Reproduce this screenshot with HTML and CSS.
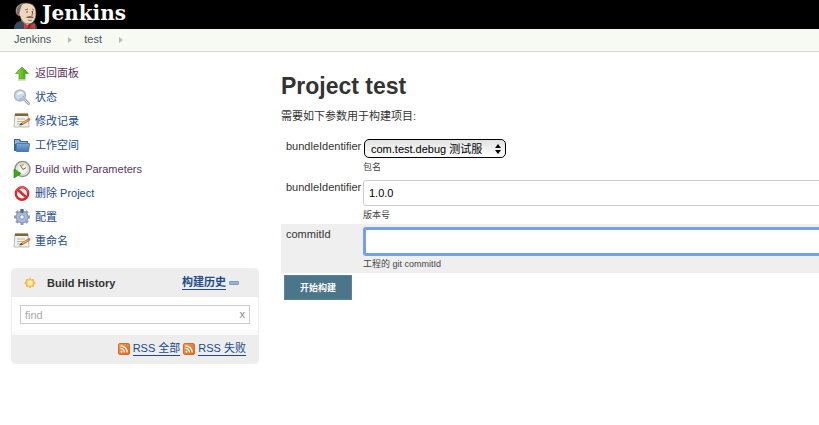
FILE: index.html
```html
<!DOCTYPE html>
<html lang="zh-CN">
<head>
<meta charset="utf-8">
<title>test [Jenkins]</title>
<link rel="stylesheet" href="styles.css">
</head>
<body>
<svg class="defs" aria-hidden="true">
  <defs>
    <linearGradient id="green" x2="1" y2="0"><stop stop-color="#8be234"/><stop offset="1" stop-color="#3c9d0c"/></linearGradient>
    <linearGradient id="orange" x2="1" y2="1"><stop stop-color="#f7a04d"/><stop offset="1" stop-color="#dc6118"/></linearGradient>
    <linearGradient id="blue" x2="0" y2="1"><stop stop-color="#7da9d8"/><stop offset="1" stop-color="#4478b2"/></linearGradient>
    <symbol id="notepad" viewBox="0 0 18 18">
      <path d="M2 2h13l1 13H1z" fill="#f2f2ee" stroke="#b9b9b4"/>
      <path d="M2 1.500h13v2.500H2z" fill="#7d6930"/>
      <path d="M4 7h8M4 9.500h7M4 12h4" stroke="#b4b4b0"/>
      <path d="M8 12.500L16 7.500" stroke="#8b5820" stroke-width="2.500"/>
      <path d="M9 11.500L16 7.300" stroke="#f0ad45" stroke-width="1.500"/>
      <path d="M15 8l2-1.200" stroke="#d76d60" stroke-width="2.500"/>
      <path d="M6 13.500l2-2 1 1.500z" fill="#4b4031"/>
    </symbol>
    <symbol id="rss" viewBox="0 0 12 12">
      <rect x=".5" y=".5" width="11" height="11" rx="1.500" fill="url(#orange)" stroke="#d96d28"/>
      <circle cx="3.500" cy="8.700" r="1" fill="#fff"/>
      <path d="M2.500 5.500a4 4 0 0 1 4 4M2.500 2.800a6.700 6.700 0 0 1 6.700 6.700" fill="none" stroke="#fff" stroke-width="1.300"/>
    </symbol>
  </defs>
</svg>

<header class="header">
  <a class="logo" href="#">
    <svg class="butler" viewBox="0 0 24 27" aria-hidden="true">
      <path d="M0 27c0-4 2-7 6-8l13 1c3 1 4 4 4 7z" fill="#354b62"/>
      <path d="M7 18l6 6 6-6v-3H7z" fill="#eee"/>
      <path d="M2 10C1 4 6 1 12 1c7 0 10 4 10 10 0 7-3 11-8 11-4 0-7-4-8-8-2 0-4-2-4-4z" fill="#efd5bc" stroke="#50443d" stroke-width=".7"/>
      <path d="M2.500 9C3 4 6 2 9 2 7 4 7 6 6 9l-1 4c-2-1-3-2-2.500-4z" fill="#777571"/>
      <path d="M5 10c-2 0-1 4 1 3M11 8l3-1m4 0l2 1m-2 1l1 4h-2" fill="none" stroke="#765744" stroke-width=".8"/>
      <circle cx="13" cy="10" r=".7" fill="#333"/><circle cx="18.500" cy="10" r=".7" fill="#333"/>
      <path d="M12 15l4-1 4 1-1 1h-6z" fill="#6b625c"/>
      <path d="M14 18q2 1 4 0" stroke="#9c5147" stroke-width=".8" fill="none"/>
      <path d="M10 21.500l5 2 6-2V27l-6-1.500-5 1.500z" fill="#d83832"/>
      <path d="M14 23h3v2.500h-3z" fill="#912521"/>
    </svg>
    <span>Jenkins</span>
  </a>
</header>

<nav class="breadcrumbs" aria-label="breadcrumbs">
  <a href="#">Jenkins</a><i class="crumb-arrow"></i>
  <a href="#">test</a><i class="crumb-arrow"></i>
</nav>

<div class="layout">
  <aside class="sidebar">
    <nav class="tasks">
      <a class="visited" href="#"><svg viewBox="0 0 18 18"><path d="M9 3l6.500 6.500H12V15H6V9.500H2.500z" fill="url(#green)" stroke="#53aa2b" stroke-width=".8"/><path d="M5 16h8" stroke="#b9c4b1"/></svg>返回面板</a>
      <a href="#"><svg viewBox="0 0 18 18"><path d="M11.500 11.500l4 4" stroke="#aaa" stroke-width="3" stroke-linecap="round"/><path d="M11.500 11.500l4 4" stroke="#ddd" stroke-linecap="round"/><circle cx="7" cy="7.500" r="5.500" fill="#c6dbf5" stroke="#b4b7bc" stroke-width="1.500"/><path d="M4 7.500q0-3 3-4 3 0 4 2-4 0-7 2z" fill="#f2f8ff"/><path d="M6 11.500q4 0 5-4" stroke="#82acdf" fill="none"/></svg>状态</a>
      <a href="#"><svg><use href="#notepad"/></svg>修改记录</a>
      <a href="#"><svg viewBox="0 0 18 18"><path d="M1 15V3h6l1 2h7v10z" fill="#3b669b"/><path d="M2 4h4l1 2h7v2H2z" fill="#8fb0d5"/><path d="M3.500 7.500h13l-1 8h-12z" fill="url(#blue)" stroke="#4c7bb0"/></svg>工作空间</a>
      <a class="visited" href="#"><svg viewBox="0 0 18 18"><circle cx="9.500" cy="9" r="7.500" fill="#f3f3ec" stroke="#8f918a" stroke-width="1.500"/><circle cx="9.500" cy="9" r="5.500" fill="none" stroke="#d0d1ca"/><path d="M7 5l3 4.500 3-2" stroke="#666" fill="none"/><path d="M8 5.500l3-1" stroke="#d8b13a" stroke-width="1.500"/><path d="M1 9l7 4.500L1 18z" fill="#35ae15" stroke="#278b12" stroke-width=".7"/></svg>Build with Parameters</a>
      <a href="#"><svg viewBox="0 0 18 18"><circle cx="9" cy="9.500" r="6.200" fill="#f7eeee" stroke="#cf2d30" stroke-width="2.400"/><path d="M4.500 5.500l9 8" stroke="#cf2d30" stroke-width="2.400"/><path d="M3 7a6.500 6.500 0 0 1 12 0" fill="none" stroke="#ec7779" stroke-width=".8"/></svg>删除 Project</a>
      <a href="#"><svg viewBox="0 0 18 18"><g stroke="#8e9dc0" stroke-width="3"><path d="M9 1v16M1 9h16M3.300 3.300l11.400 11.400M14.700 3.300L3.300 14.700"/></g><circle cx="9" cy="9" r="6" fill="#a9b8d8" stroke="#8495bd"/><circle cx="9" cy="9" r="2.200" fill="#fff" stroke="#8192b7"/><path d="M7.500 1h3v4h-3z" fill="#456da0"/></svg>配置</a>
      <a href="#"><svg><use href="#notepad"/></svg>重命名</a>
    </nav>

    <section class="history">
      <div class="history-head">
        <svg viewBox="0 0 14 14"><path d="M7 .5l1.800 2.200 2.800-.3.300 2.800L14 7l-2.100 1.800-.3 2.800-2.800-.3L7 13.500l-1.800-2.200-2.800.3-.3-2.800L0 7l2.100-1.800.3-2.800 2.800.3z" fill="#f6b55b"/><circle cx="7" cy="7" r="3.600" fill="#fff0a0" stroke="#f9cf66"/></svg>
        <h2>Build History</h2>
        <a href="#">构建历史</a><i class="collapse"></i>
      </div>
      <div class="history-search">
        <input type="text" placeholder="find" aria-label="find">
        <button type="button" aria-label="clear">x</button>
      </div>
      <div class="history-feeds">
        <svg><use href="#rss"/></svg><a href="#">RSS 全部</a>
        <svg><use href="#rss"/></svg><a href="#">RSS 失败</a>
      </div>
    </section>
  </aside>

  <main class="main">
    <h1>Project test</h1>
    <p class="intro">需要如下参数用于构建项目:</p>
    <form>
      <div class="field">
        <label for="bundle">bundleIdentifier</label>
        <div class="value">
          <div class="picker">
            <select id="bundle"><option>com.test.debug 测试服</option></select>
            <svg viewBox="0 0 6 10" aria-hidden="true"><path d="M3 0l3 4H0zM3 10l3-4H0z"/></svg>
          </div>
          <div class="help">包名</div>
        </div>
      </div>
      <div class="field">
        <label for="version">bundleIdentifier</label>
        <div class="value"><input id="version" type="text" value="1.0.0"><div class="help">版本号</div></div>
      </div>
      <div class="field active">
        <label for="commit">commitId</label>
        <div class="value"><input id="commit" type="text"><div class="help">工程的 git commitId</div></div>
      </div>
      <button class="submit" type="submit">开始构建</button>
    </form>
  </main>
</div>
</body>
</html>
```
FILE: styles.css
```css
* { box-sizing: border-box; }
body {
  margin: 0;
  overflow-x: hidden;
  background: #fff;
  color: #333;
  font: 11px/16px "Liberation Sans", "Noto Sans CJK SC", sans-serif;
}
input, select, button { font: inherit; margin: 0; }
svg { display: block; flex: none; }
.defs { position: absolute; width: 0; height: 0; }

.header { height: 29px; padding-left: 14px; background: #000; }
.logo {
  display: flex;
  gap: 4px;
  height: 29px;
  color: #fff;
  font: bold 20px/26px "DejaVu Serif", serif;
  text-decoration: none;
}
.butler { width: 24px; height: 27px; align-self: flex-end; }

.breadcrumbs {
  display: flex;
  align-items: center;
  height: 23px;
  padding: 0 14px 2px;
  border-bottom: 1px solid #d3d7cf;
  background: #f6faf2;
}
.breadcrumbs a { color: #4d545d; text-decoration: none; }
.crumb-arrow {
  margin: 2px 12px 0 17px;
  border: solid transparent;
  border-width: 3px 0 3px 4px;
  border-left-color: #bbb;
}

.layout { display: flex; }
.sidebar { flex: none; width: 270px; padding: 9px 11px; }
.tasks { margin-bottom: 15px; }
.tasks a {
  display: flex;
  align-items: center;
  gap: 4px;
  height: 24px;
  padding-left: 2px;
  color: #204a87;
  text-decoration: none;
}
.tasks a.visited { color: #5c3566; }
.tasks svg { width: 18px; height: 18px; }

.history { overflow: hidden; border: 1px solid #eee; border-radius: 4px; }
.history a { color: #204a87; text-decoration: none; border-bottom: 1px solid #204a87; line-height: 13px; }
.history-head { display: flex; align-items: center; height: 28px; padding: 0 19px 0 12px; background: #ededed; }
.history-head svg { width: 12px; height: 12px; }
.history-head h2 { flex: 1; margin: 0 0 0 11px; font-size: 11px; }
.history-head a { font-weight: bold; }
.collapse { width: 10px; height: 4px; margin-left: 3px; border: 1px solid #7c9ac4; border-radius: 1px; background: #99b3d6; }
.history-search { display: flex; padding: 8px 8px 6px; border-bottom: 5px solid #fafafa; }
.history-search input {
  flex: 1;
  min-width: 0;
  height: 19px;
  padding: 0 4px;
  border: 1px solid #ccc;
  border-right: 0;
  border-radius: 0;
  outline: 0;
}
.history-search input::placeholder { color: #aaa; }
.history-search button { padding: 0 4px; border: 1px solid #ccc; border-left: 0; background: #fff; color: #888; line-height: 15px; }
.history-feeds { display: flex; align-items: center; justify-content: flex-end; gap: 3px; height: 28px; padding-right: 12px; background: #ededed; }
.history-feeds svg { width: 12px; height: 12px; }

.main { flex: 1; min-width: 0; margin-right: -8px; padding: 20px 0 0 11px; }
h1 { margin: 0 0 8px; font-size: 23px; line-height: 28px; }
.intro { margin: 0 0 12px; }
.field { display: grid; grid-template-columns: 77px 1fr; padding: 3px 0 0 5px; }
.field:first-child { padding-bottom: 1px; }
.field label { line-height: 14px; }
.field input {
  display: block;
  width: 100%;
  height: 26px;
  padding: 0 5px;
  border: 1px solid #ccc;
  border-radius: 3px;
  outline: 0;
  background: #fff;
  color: #000;
}
.help { color: #444; font-size: 9px; line-height: 18px; }
.active { background: #efefef; }
.active .help { line-height: 17px; }
.field.active input { height: 29px; border: 3px solid #74a0e8; }
.picker { position: relative; width: 143px; padding-left: 1px; }
.picker select {
  display: block;
  width: 100%;
  height: 19px;
  padding: 0 16px 0 6px;
  appearance: none;
  border: 1px solid #000;
  border-radius: 5px;
  outline: 0;
  background: linear-gradient(#e2e2e2, #fff);
  color: #000;
}
.picker svg { position: absolute; top: 5px; right: 5px; width: 6px; height: 10px; pointer-events: none; }
.submit {
  display: block;
  height: 25px;
  margin: 2px 3px;
  padding: 0 15px;
  border: 1px solid #5c8299;
  background: #4b758b;
  color: #fff;
  font-size: 9px;
  font-weight: bold;
}
```
